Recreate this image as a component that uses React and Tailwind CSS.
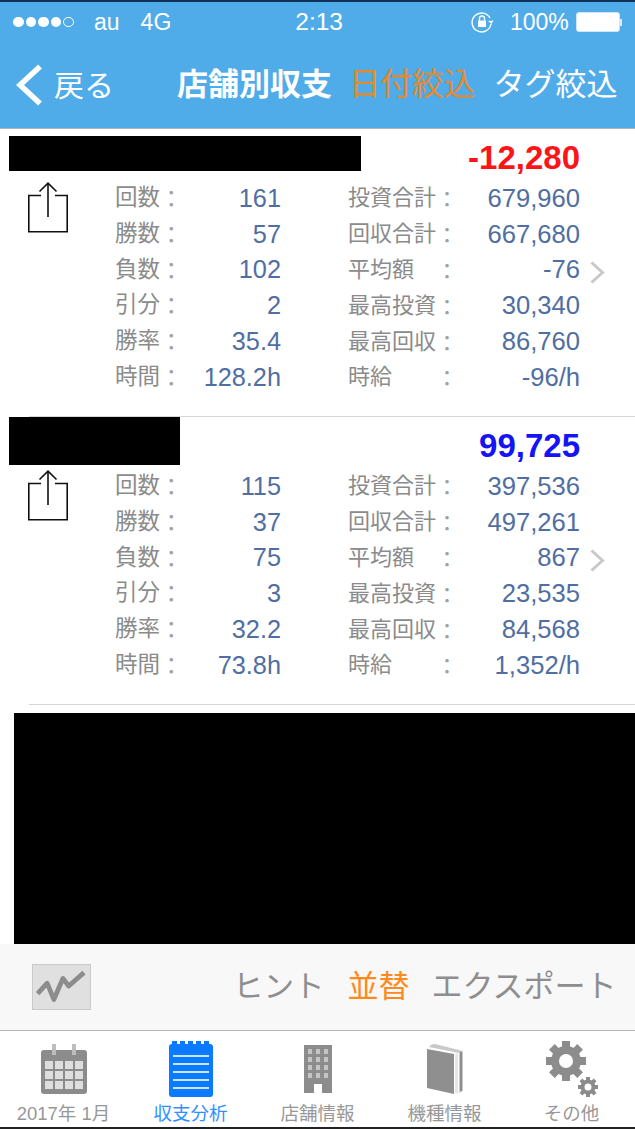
import React from 'react';

const FONT = 'font-["Liberation_Sans","Noto_Sans_CJK_JP",sans-serif]';

const shops = [
  {
    barW: 'w-[352px] h-[35px] mt-[7px]',
    total: '-12,280',
    totalColor: 'text-[#fb1518]',
    rows: [
      ['回数', '161', '投資合計', '679,960'],
      ['勝数', '57', '回収合計', '667,680'],
      ['負数', '102', '平均額　', '-76'],
      ['引分', '2', '最高投資', '30,340'],
      ['勝率', '35.4', '最高回収', '86,760'],
      ['時間', '128.2h', '時給　　', '-96/h'],
    ],
  },
  {
    barW: 'w-[171px] h-[48px]',
    total: '99,725',
    totalColor: 'text-[#1414f5]',
    rows: [
      ['回数', '115', '投資合計', '397,536'],
      ['勝数', '37', '回収合計', '497,261'],
      ['負数', '75', '平均額　', '867'],
      ['引分', '3', '最高投資', '23,535'],
      ['勝率', '32.2', '最高回収', '84,568'],
      ['時間', '73.8h', '時給　　', '1,352/h'],
    ],
  },
];

const ShareIcon = () => (
  <svg width="40" height="51" viewBox="0 0 40 51" fill="none" stroke="#111" strokeWidth="1.6">
    <path d="M13 13.5H0.8V49.8H39.2V13.5H27" />
    <path d="M20 1.5V35" />
    <path d="M11.5 9.5L20 1.2L28.5 9.5" />
  </svg>
);

const Chevron = () => (
  <svg width="15" height="23" viewBox="0 0 15 23" fill="none" stroke="#c8c8cc" strokeWidth="3">
    <path d="M1.5 1.5L12.5 11.5L1.5 21.5" />
  </svg>
);

// the full-width colon sits a little high in the CJK font, nudge it down
const Label = ({ text, size }) => (
  <span className={`flex text-[#8b8b8b] ${size}`}>
    {text}
    <span className="translate-y-[2px] text-[#a0a0a0]">：</span>
  </span>
);

const ShopCard = ({ shop }) => (
  <>
    <div className="flex h-[287px] items-center">
      <div className="w-[580px] self-start">
        <div className="flex h-[51px] items-start justify-between">
          <div className={`ml-[9px] bg-black ${shop.barW}`} />
          <span className={`mt-[11px] text-[33px] leading-[36px] font-bold ${shop.totalColor}`}>
            {shop.total}
          </span>
        </div>
        <div className="flex">
          <div className="ml-[28px] w-[87px] pt-[2px]">
            <ShareIcon />
          </div>
          <div className="w-[166px]">
            {shop.rows.map((r) => (
              <div key={r[0]} className="flex h-[35.8px] items-center justify-between">
                <Label text={r[0]} size="text-[22.5px]" />
                <span className="text-[25.3px] leading-[30px] text-[#4f6ea2]">{r[1]}</span>
              </div>
            ))}
          </div>
          <div className="ml-[67px] flex-1">
            {shop.rows.map((r) => (
              <div key={r[2]} className="flex h-[35.8px] items-center justify-between">
                <Label text={r[2]} size="text-[22px]" />
                <span className="text-[25.6px] leading-[30px] text-[#4f6ea2]">{r[3]}</span>
              </div>
            ))}
          </div>
        </div>
      </div>
      <div className="ml-[10px]">
        <Chevron />
      </div>
    </div>
    <div className="ml-[29px] h-px bg-[#d6d6d6]" />
  </>
);

const CalendarIcon = () => (
  <svg width="46" height="50" viewBox="0 0 46 50">
    <rect x="0" y="6" width="46" height="44" rx="3" fill="#8c8c8c" />
    <rect x="11" y="0" width="4" height="11" fill="#bdbdbd" />
    <rect x="31" y="0" width="4" height="11" fill="#bdbdbd" />
    {[17, 27, 37].map((y) =>
      [4, 14, 24, 34].map((x) => <rect key={`${x}-${y}`} x={x} y={y} width="8" height="8" fill="#dedede" />)
    )}
  </svg>
);

const NoteIcon = () => (
  <svg width="44" height="56" viewBox="0 0 44 56">
    <rect x="0" y="3" width="44" height="53" rx="3" fill="#0a7bff" />
    {[3, 11, 19, 27, 35].map((x) => (
      <rect key={x} x={x} y="0" width="5" height="5" fill="#0a7bff" />
    ))}
    {[14, 22, 30, 38, 46].map((y) => (
      <rect key={y} x="4" y={y} width="36" height="2" fill="#cfe4ff" />
    ))}
  </svg>
);

const BuildingIcon = () => (
  <svg width="28" height="48" viewBox="0 0 28 48">
    <path d="M0 0H28V48H18V39H10V48H0Z" fill="#8c8c8c" />
    {[4, 12, 20, 28].map((y) =>
      [4, 12, 20].map((x) => <rect key={`${x}-${y}`} x={x} y={y} width="4" height="5" fill="#c4c4c4" />)
    )}
  </svg>
);

const BookIcon = () => (
  <svg width="36" height="50" viewBox="0 0 36 50">
    <path d="M2 3C3 1 5 0 8 0L36 7V47L32 49V9Z" fill="#c9c9c9" />
    <path d="M0 5L27 10V50L0 44Z" fill="#8f8f8f" />
    <path d="M28 10L31 9V49L28 50Z" fill="#e6e6e6" />
    <path d="M33 8H35V47H33Z" fill="#8f8f8f" />
  </svg>
);

const Gear = ({ cx, cy, r, tooth, width, stroke }) => (
  <g fill="#8c8c8c">
    {[0, 45, 90, 135, 180, 225, 270, 315].map((a) => (
      <rect
        key={a}
        x={cx - width / 2}
        y={cy - r - tooth}
        width={width}
        height={tooth + 3}
        transform={`rotate(${a} ${cx} ${cy})`}
      />
    ))}
    <circle cx={cx} cy={cy} r={r - stroke / 2} fill="none" stroke="#8c8c8c" strokeWidth={stroke} />
  </g>
);

const GearIcon = () => (
  <svg width="52" height="56" viewBox="0 0 52 56">
    <Gear cx={20} cy={20} r={15} tooth={5} width={8} stroke={8} />
    <Gear cx={42} cy={46} r={7.5} tooth={2.5} width={4} stroke={4} />
  </svg>
);

const tabs = [
  { label: '2017年 1月', icon: <CalendarIcon /> },
  { label: '収支分析', icon: <NoteIcon />, active: true },
  { label: '店舗情報', icon: <BuildingIcon /> },
  { label: '機種情報', icon: <BookIcon /> },
  { label: 'その他', icon: <GearIcon /> },
];

const LockIcon = () => (
  <svg width="24" height="24" viewBox="0 0 24 24" fill="none" stroke="#fff" strokeWidth="1.4">
    <path d="M20 8A9.5 9.5 0 1 0 21 14" />
    <path d="M18 11L21.5 14L23.5 10.5Z" fill="#fff" stroke="none" />
    <rect x="8" y="10.5" width="8" height="6.5" fill="#fff" stroke="none" />
    <path d="M9.5 10.5V8.5A2.5 2.5 0 0 1 14.5 8.5V10.5" />
  </svg>
);

export default function App() {
  return (
    <div className={`flex h-[1129px] w-[635px] flex-col overflow-hidden bg-white ${FONT}`}>
      {/* Status + nav */}
      <header className="h-[129px] shrink-0 border-b border-[#b3b3b3] bg-[#4face9] text-white">
        <div className="h-[2px] bg-[#12305a]" />
        <div className="flex h-[40px] items-center pl-[13px] pr-[8px] text-[23px]">
          <div className="flex w-[70px] items-center gap-[2px]">
            {[1, 2, 3, 4].map((d) => (
              <span key={d} className="size-[10.5px] rounded-full bg-white" />
            ))}
            <span className="size-[10.5px] rounded-full border border-white" />
          </div>
          <span className="ml-[11px]">au</span>
          <span className="ml-[21px]">4G</span>
          <span className="ml-[124px] text-[24.5px]">2:13</span>
          <span className="ml-[127px]">
            <LockIcon />
          </span>
          <span className="ml-[16px]">100%</span>
          <div className="ml-[7px] flex items-center">
            <div className="h-[20px] w-[44px] rounded-[3px] border border-[#cfe6f8] bg-white" />
            <div className="h-[7px] w-[2px] bg-[#dcecf9]" />
          </div>
        </div>
        <div className="flex h-[86px] items-center text-[31px]">
          <svg className="ml-[16px]" width="27" height="42" viewBox="0 0 27 42" fill="none" stroke="#fff" strokeWidth="5.5">
            <path d="M24 2.5L4 21L24 39.5" />
          </svg>
          <span className="ml-[11px] text-[30px]">戻る</span>
          <span className="ml-[63px] font-bold">店舗別収支</span>
          <span className="ml-[17px] text-[31.6px] text-[#e3892f]">日付絞込</span>
          <span className="ml-[18px]">タグ絞込</span>
        </div>
      </header>

      {/* List */}
      <main className="flex min-h-0 flex-1 flex-col">
        {shops.map((s) => (
          <ShopCard key={s.total} shop={s} />
        ))}
        <div className="mt-[8px] ml-[14px] flex-1 bg-black" />
      </main>

      {/* Toolbar */}
      <div className="flex h-[87px] shrink-0 items-center border-b border-[#b5b5b5] bg-[#f8f8f8] text-[#8e8e8e]">
        <svg className="ml-[32px] border border-[#cacaca] bg-[#e0e0e0]" width="59" height="46" viewBox="0 0 59 46" fill="none" stroke="#8c8c8c" strokeWidth="5" strokeLinejoin="round">
          <path d="M4.5 30L14.5 19L21.5 36L31 14L37 22L53 8" />
        </svg>
        <span className="ml-[142px] text-[30.5px]">ヒント</span>
        <span className="ml-[23px] text-[31px] text-[#ff8a1c]">並替</span>
        <span className="ml-[22px] text-[31px]">エクスポート</span>
      </div>

      {/* Tab bar */}
      <nav className="grid h-[98px] shrink-0 grid-cols-5 border-b-2 border-[#222]">
        {tabs.map((t) => (
          <div key={t.label} className="flex flex-col items-center">
            <div className="flex h-[66px] items-center pt-[9px]">{t.icon}</div>
            <span className={`mt-[7px] text-[18.5px] leading-[20px] ${t.active ? 'text-[#2f8fff]' : 'text-[#979797]'}`}>
              {t.label}
            </span>
          </div>
        ))}
      </nav>
    </div>
  );
}
